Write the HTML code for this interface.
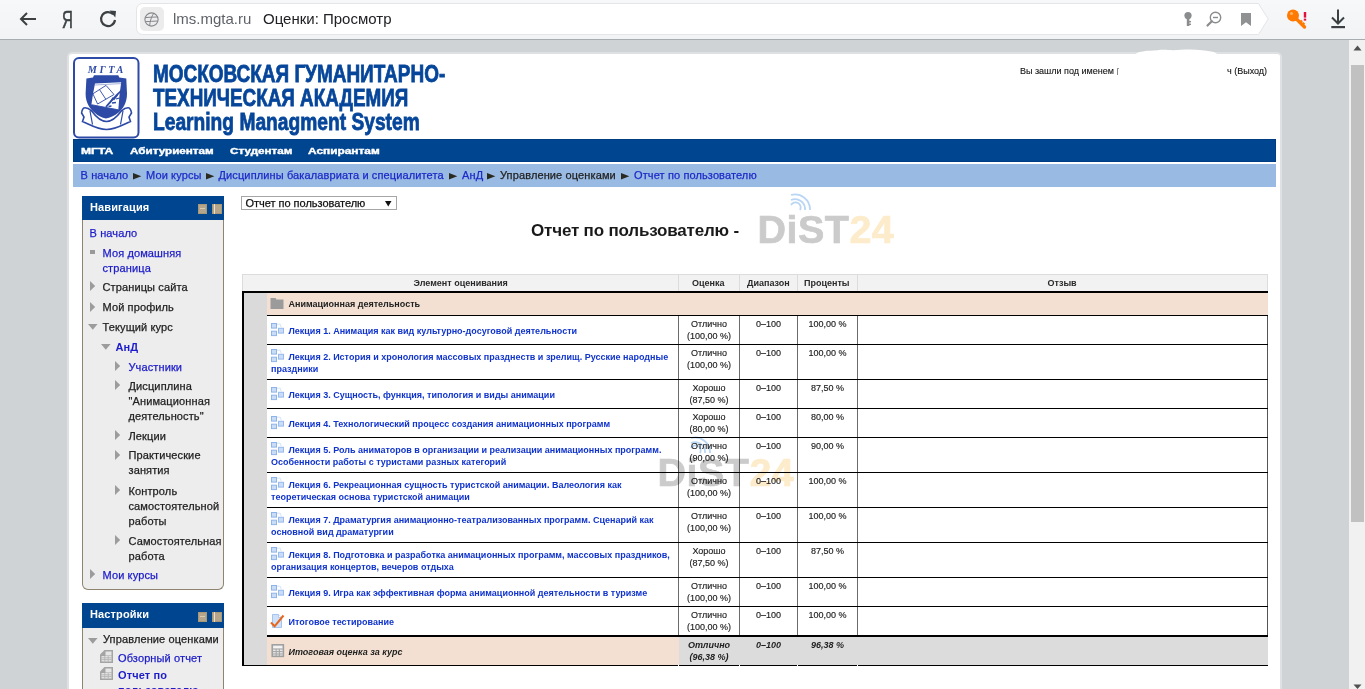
<!DOCTYPE html>
<html><head><meta charset="utf-8"><title>Оценки: Просмотр</title>
<style>html,body{margin:0;padding:0;width:1365px;height:689px;overflow:hidden;background:#d0d3d6;font-family:'Liberation Sans', sans-serif}
#root{position:relative;width:1365px;height:689px;overflow:hidden}</style></head>
<body><div id="root">
<div style="position:absolute;left:0px;top:0px;width:1365px;height:39px;background:linear-gradient(#f7f8f9,#f2f3f5);"></div>
<div style="position:absolute;left:0px;top:39px;width:1365px;height:1px;background:#a9acaf;"></div>
<svg style="position:absolute;left:18px;top:10px;" width="20" height="18" viewBox="0 0 20 18"><path d="M3 9 H18 M9 3 L3 9 L9 15" fill="none" stroke="#3c4043" stroke-width="2"/></svg>
<div style="position:absolute;left:62.3px;top:7.11px;font-size:23.5px;line-height:27.5px;color:#3c4043;font-weight:normal;font-style:normal;white-space:nowrap;font-family:'Liberation Sans', sans-serif;transform:scaleX(0.64);transform-origin:left;-webkit-text-stroke:0.6px #3c4043">Я</div>
<svg style="position:absolute;left:98px;top:8px;" width="22" height="22" viewBox="0 0 22 22"><path d="M15.2 6.3 A7 7 0 1 0 17 12" fill="none" stroke="#3c4043" stroke-width="2.2"/><path d="M11.5 2.5 L18 3 L17.3 9.5 Z" fill="#3c4043"/></svg>
<svg style="position:absolute;left:136px;top:3px;" width="1134" height="33" viewBox="0 0 1134 33"><path d="M6.5 0.5 H1122.5 L1132.2 16 L1122.5 31.5 H6.5 A6 6 0 0 1 0.5 25.5 V6.5 A6 6 0 0 1 6.5 0.5 Z" fill="#fff" stroke="#e4e5e7" stroke-width="1"/></svg>
<div style="position:absolute;left:140px;top:7px;width:24px;height:24px;background:#ececec;border-radius:5px"></div>
<svg style="position:absolute;left:144px;top:12px;" width="16" height="16" viewBox="0 0 16 16"><circle cx="7.5" cy="7.5" r="6.6" fill="none" stroke="#85878a" stroke-width="1.1"/><path d="M1.3 5.6 C5 5.2 10 5 13.7 5 M1.4 9.7 C5 9.5 10 9.2 13.6 9 M9.8 1.2 C7.5 4.5 6 9 5.6 13.9" fill="none" stroke="#85878a" stroke-width="1"/></svg>
<div style="position:absolute;left:173px;top:8.80px;font-size:15px;line-height:19px;color:#5f6368;font-weight:normal;font-style:normal;white-space:nowrap;font-family:'Liberation Sans', sans-serif;">lms.mgta.ru</div>
<div style="position:absolute;left:263px;top:8.80px;font-size:15px;line-height:19px;color:#202124;font-weight:normal;font-style:normal;white-space:nowrap;font-family:'Liberation Sans', sans-serif;">Оценки: Просмотр</div>
<svg style="position:absolute;left:1182px;top:11px;" width="12" height="16" viewBox="0 0 12 16"><circle cx="6" cy="4.6" r="3.6" fill="#8a8c8e"/><rect x="4.8" y="6" width="2.6" height="9" fill="#8a8c8e"/><rect x="7" y="10" width="2" height="1.4" fill="#8a8c8e"/><rect x="7" y="12.6" width="2" height="1.4" fill="#8a8c8e"/></svg>
<svg style="position:absolute;left:1205px;top:10px;" width="18" height="18" viewBox="0 0 18 18"><circle cx="10.5" cy="7.5" r="5.2" fill="none" stroke="#8a8c8e" stroke-width="1.4"/><path d="M8 7.5 H13" stroke="#8a8c8e" stroke-width="1.4"/><path d="M6.8 11.2 L2.5 15.5" stroke="#8a8c8e" stroke-width="2.2" stroke-linecap="round"/></svg>
<svg style="position:absolute;left:1240px;top:12px;" width="12" height="15" viewBox="0 0 12 15"><path d="M1 1 H11 V14 L6 10.3 L1 14 Z" fill="#8f9193"/></svg>
<svg style="position:absolute;left:1286px;top:8px;" width="24" height="22" viewBox="0 0 24 22"><circle cx="7" cy="7.5" r="6" fill="#ff7a00"/><path d="M9.5 10 L18.5 19" stroke="#ff7a00" stroke-width="3.4" stroke-linecap="round"/><path d="M14 14.5 L16 12.5 M16.3 16.8 L18.3 14.8" stroke="#ff7a00" stroke-width="2.4"/><circle cx="5.5" cy="5.5" r="1.6" fill="#ffd9a8" opacity="0.6"/><rect x="17.8" y="4" width="2.4" height="5.6" fill="#e0103a"/><rect x="17.8" y="10.6" width="2.4" height="2" fill="#e0103a"/></svg>
<svg style="position:absolute;left:1329px;top:8px;" width="18" height="22" viewBox="0 0 18 22"><path d="M9 1.5 V15.5 M3 9.5 L9 15.5 L15 9.5" fill="none" stroke="#3c4043" stroke-width="2"/><rect x="2.3" y="18" width="13.7" height="2.2" fill="#3c4043"/></svg>
<div style="position:absolute;left:0px;top:40px;width:1349px;height:649px;background:#d0d3d6;"></div>
<div style="position:absolute;left:1349px;top:40px;width:16px;height:649px;background:#f1f1f1;"></div>
<svg style="position:absolute;left:1353px;top:45px;" width="9" height="6" viewBox="0 0 9 6"><path d="M0.5 5.5 L4.5 0.5 L8.5 5.5 Z" fill="#505050"/></svg>
<div style="position:absolute;left:1351px;top:65px;width:13px;height:457px;background:#c1c1c1;"></div>
<svg style="position:absolute;left:1353px;top:684px;" width="9" height="6" viewBox="0 0 9 6"><path d="M0.5 0.5 L8.5 0.5 L4.5 5 Z" fill="#505050"/></svg>
<div style="position:absolute;left:67px;top:52px;width:1211px;height:700px;background:#fff;border:2px solid #dee0e2;border-radius:5px"></div>
<svg style="position:absolute;left:73px;top:57px;" width="67" height="82" viewBox="0 0 67 82"><rect x="1" y="1" width="64.5" height="79.5" rx="5" fill="#fff" stroke="#2d4aa6" stroke-width="2"/>
<text x="33.8" y="15.5" text-anchor="middle" font-family="Liberation Serif" font-style="italic" font-weight="bold" font-size="10.2" letter-spacing="2.6" fill="#2d4aa6">МГТА</text>
<path d="M13.4 21.5 L20 20.5 L21 18.3 L45.3 18.3 L46.3 20.5 L53.3 21.5 L54 36.8 C54 46 50 52 45.3 55.7 C41 59 37 60.5 33 61.5 C29 60.5 25 59 21.7 55.7 C17 52 12.6 46 12.6 36.8 Z" fill="#2d4aa6"/>
<path d="M22 26.6 L48.2 25.2 L46.5 38 L45.3 52.8 L18.4 47.7 L20 37 Z" fill="#fff"/>
<path d="M22 28 L48 26.6" stroke="#2d4aa6" stroke-width="0.7" opacity="0.6"/>
<path d="M19.9 36.8 L33 28.4 L41 37.5 L24.6 47 Z M26.5 32.6 L32.8 42.2" fill="none" stroke="#2d4aa6" stroke-width="0.9"/>
<path d="M18.4 47.7 L45.3 52.8" stroke="#2d4aa6" stroke-width="0.9"/>
<path d="M33 50 C37 45 43 39 48.2 33.5" fill="none" stroke="#2d4aa6" stroke-width="1.8"/>
<path d="M37 46 L40 40.5 M40.5 43 L44.5 38 M35.5 49.5 L38.5 49 M39 46 L43 45.5 M43 42 L46.5 41" stroke="#2d4aa6" stroke-width="1.3"/>
<path d="M8.6 56 C9 53 10 50.8 12 50.8 C14.5 50.8 16.5 52 18.5 53.8 C23 60 28 64.5 33.5 64.5 C39 64.5 44 60 48.5 53.8 C50.5 52 52.5 50.8 55 50.8 C57 50.8 58 53 58.5 56 L56 60 L57.5 64.5 C51 67 43 72.5 33.5 72.5 C24 72.5 16 67 9.5 64.5 L11 60 Z" fill="#fff" stroke="#2d4aa6" stroke-width="1.6"/>
<path d="M17 54 L19.5 67.5 M50 54 L47.5 67.5" fill="none" stroke="#2d4aa6" stroke-width="1.2"/></svg>
<div style="position:absolute;left:153px;top:60.18px;font-size:24px;line-height:28px;color:#06469a;font-weight:bold;font-style:normal;white-space:nowrap;font-family:'Liberation Sans', sans-serif;transform:scaleX(0.79);transform-origin:left;-webkit-text-stroke:0.8px #06469a">МОСКОВСКАЯ ГУМАНИТАРНО-</div>
<div style="position:absolute;left:153px;top:84.18px;font-size:24px;line-height:28px;color:#06469a;font-weight:bold;font-style:normal;white-space:nowrap;font-family:'Liberation Sans', sans-serif;transform:scaleX(0.785);transform-origin:left;-webkit-text-stroke:0.8px #06469a">ТЕХНИЧЕСКАЯ АКАДЕМИЯ</div>
<div style="position:absolute;left:153px;top:108.18px;font-size:24px;line-height:28px;color:#06469a;font-weight:bold;font-style:normal;white-space:nowrap;font-family:'Liberation Sans', sans-serif;transform:scaleX(0.8);transform-origin:left;-webkit-text-stroke:0.8px #06469a">Learning Managment System</div>
<div style="position:absolute;left:1020px;top:65.38px;font-size:9px;line-height:13px;color:#111;font-weight:normal;font-style:normal;white-space:nowrap;font-family:'Liberation Sans', sans-serif;-webkit-text-stroke:0.1px #111">Вы зашли под именем</div>
<div style="position:absolute;left:1117px;top:68px;width:1px;height:7px;background:#888;"></div>
<div style="position:absolute;left:1117px;top:68px;width:2px;height:1px;background:#999;"></div>
<div style="position:absolute;left:1227px;top:65.38px;font-size:9px;line-height:13px;color:#111;font-weight:normal;font-style:normal;white-space:nowrap;font-family:'Liberation Sans', sans-serif;-webkit-text-stroke:0.1px #111">ч (Выход)</div>
<svg style="position:absolute;left:1130px;top:47px;" width="95" height="9" viewBox="0 0 95 9"><path d="M4 8 C8 5 13 4 20 3.8 C27 3.6 31 2.5 38 3 C46 3.5 52 2.6 60 2.6 C68 2.6 76 3.5 84 5 L89 8 Z" fill="#fff"/></svg>
<div style="position:absolute;left:73px;top:139px;width:1203px;height:23px;background:#004590;box-shadow:inset 0 0 0 1px #003c80"></div>
<div style="position:absolute;left:80.5px;top:144.04px;font-size:9.4px;line-height:13.4px;color:#fff;font-weight:bold;font-style:normal;white-space:nowrap;font-family:'Liberation Sans', sans-serif;transform:scaleX(1.287);transform-origin:left;-webkit-text-stroke:0.4px #fff">МГТА</div>
<div style="position:absolute;left:129.5px;top:144.04px;font-size:9.4px;line-height:13.4px;color:#fff;font-weight:bold;font-style:normal;white-space:nowrap;font-family:'Liberation Sans', sans-serif;transform:scaleX(1.245);transform-origin:left;-webkit-text-stroke:0.4px #fff">Абитуриентам</div>
<div style="position:absolute;left:229.5px;top:144.04px;font-size:9.4px;line-height:13.4px;color:#fff;font-weight:bold;font-style:normal;white-space:nowrap;font-family:'Liberation Sans', sans-serif;transform:scaleX(1.245);transform-origin:left;-webkit-text-stroke:0.4px #fff">Студентам</div>
<div style="position:absolute;left:307.5px;top:144.04px;font-size:9.4px;line-height:13.4px;color:#fff;font-weight:bold;font-style:normal;white-space:nowrap;font-family:'Liberation Sans', sans-serif;transform:scaleX(1.266);transform-origin:left;-webkit-text-stroke:0.4px #fff">Аспирантам</div>
<div style="position:absolute;left:73px;top:164px;width:1203px;height:23px;background:#99bbe3;"></div>
<div style="position:absolute;left:80.5px;top:167.89px;font-size:11px;line-height:15px;color:#1c2ac8;font-weight:normal;font-style:normal;white-space:nowrap;font-family:'Liberation Sans', sans-serif;;letter-spacing:0.12px;-webkit-text-stroke:0.25px #1c2ac8">В начало</div>
<svg style="position:absolute;left:133px;top:172.5px;" width="9" height="7" viewBox="0 0 9 7"><path d="M0 0 L8.3 3.25 L0 6.5 Z" fill="#2b2a20"/></svg>
<div style="position:absolute;left:146px;top:167.89px;font-size:11px;line-height:15px;color:#1c2ac8;font-weight:normal;font-style:normal;white-space:nowrap;font-family:'Liberation Sans', sans-serif;;letter-spacing:0.12px;-webkit-text-stroke:0.25px #1c2ac8">Мои курсы</div>
<svg style="position:absolute;left:206px;top:172.5px;" width="9" height="7" viewBox="0 0 9 7"><path d="M0 0 L8.3 3.25 L0 6.5 Z" fill="#2b2a20"/></svg>
<div style="position:absolute;left:218.5px;top:167.89px;font-size:11px;line-height:15px;color:#1c2ac8;font-weight:normal;font-style:normal;white-space:nowrap;font-family:'Liberation Sans', sans-serif;;letter-spacing:0.12px;-webkit-text-stroke:0.25px #1c2ac8">Дисциплины бакалавриата и специалитета</div>
<svg style="position:absolute;left:449px;top:172.5px;" width="9" height="7" viewBox="0 0 9 7"><path d="M0 0 L8.3 3.25 L0 6.5 Z" fill="#2b2a20"/></svg>
<div style="position:absolute;left:462px;top:167.89px;font-size:11px;line-height:15px;color:#1c2ac8;font-weight:normal;font-style:normal;white-space:nowrap;font-family:'Liberation Sans', sans-serif;;letter-spacing:0.12px;-webkit-text-stroke:0.25px #1c2ac8">АнД</div>
<svg style="position:absolute;left:487px;top:172.5px;" width="9" height="7" viewBox="0 0 9 7"><path d="M0 0 L8.3 3.25 L0 6.5 Z" fill="#2b2a20"/></svg>
<div style="position:absolute;left:500px;top:167.89px;font-size:11px;line-height:15px;color:#222;font-weight:normal;font-style:normal;white-space:nowrap;font-family:'Liberation Sans', sans-serif;;letter-spacing:0.12px;-webkit-text-stroke:0.25px #222">Управление оценками</div>
<svg style="position:absolute;left:621px;top:172.5px;" width="9" height="7" viewBox="0 0 9 7"><path d="M0 0 L8.3 3.25 L0 6.5 Z" fill="#2b2a20"/></svg>
<div style="position:absolute;left:634px;top:167.89px;font-size:11px;line-height:15px;color:#1c2ac8;font-weight:normal;font-style:normal;white-space:nowrap;font-family:'Liberation Sans', sans-serif;;letter-spacing:0.12px;-webkit-text-stroke:0.25px #1c2ac8">Отчет по пользователю</div>
<div style="position:absolute;left:82px;top:219px;width:140px;height:370px;background:#ededed;border:1px solid #8e846f;border-top:none;border-radius:0 0 6px 6px"></div>
<div style="position:absolute;left:82px;top:196px;width:142px;height:24px;background:#004590;"></div>
<div style="position:absolute;left:90px;top:200.19px;font-size:11px;line-height:15px;color:#fff;font-weight:bold;font-style:normal;white-space:nowrap;font-family:'Liberation Sans', sans-serif;;letter-spacing:0.12px">Навигация</div>
<div style="position:absolute;left:198px;top:204px;width:9px;height:10px;background:#b5a58a;box-shadow:inset 0 0 0 1px #a89878"></div>
<div style="position:absolute;left:200px;top:208px;width:5px;height:1px;background:#d8ccb6;"></div>
<div style="position:absolute;left:212px;top:204px;width:10px;height:10px;background:#b5a58a;box-shadow:inset 0 0 0 1px #a89878"></div>
<div style="position:absolute;left:214px;top:204px;width:1px;height:10px;background:#e8dfcf;"></div>
<div style="position:absolute;left:89.5px;top:225.69px;font-size:11px;line-height:15px;color:#1c1cca;font-weight:normal;font-style:normal;white-space:nowrap;font-family:'Liberation Sans', sans-serif;;letter-spacing:0.12px;-webkit-text-stroke:0.25px #1c1cca">В начало</div>
<div style="position:absolute;left:90px;top:250px;width:5px;height:4px;background:#999;"></div>
<div style="position:absolute;left:102.5px;top:245.69px;font-size:11px;line-height:15px;color:#1c1cca;font-weight:normal;font-style:normal;white-space:nowrap;font-family:'Liberation Sans', sans-serif;;letter-spacing:0.12px;-webkit-text-stroke:0.25px #1c1cca">Моя домашняя</div>
<div style="position:absolute;left:102.5px;top:260.69px;font-size:11px;line-height:15px;color:#1c1cca;font-weight:normal;font-style:normal;white-space:nowrap;font-family:'Liberation Sans', sans-serif;;letter-spacing:0.12px;-webkit-text-stroke:0.25px #1c1cca">страница</div>
<svg style="position:absolute;left:90px;top:281.4px;" width="6" height="10" viewBox="0 0 6 10"><path d="M0 0 L5.2 5 L0 10 Z" fill="#9c9c9c"/></svg>
<div style="position:absolute;left:102.5px;top:279.69px;font-size:11px;line-height:15px;color:#222;font-weight:normal;font-style:normal;white-space:nowrap;font-family:'Liberation Sans', sans-serif;;letter-spacing:0.12px;-webkit-text-stroke:0.25px #222">Страницы сайта</div>
<svg style="position:absolute;left:90px;top:301.59999999999997px;" width="6" height="10" viewBox="0 0 6 10"><path d="M0 0 L5.2 5 L0 10 Z" fill="#9c9c9c"/></svg>
<div style="position:absolute;left:102.5px;top:299.89px;font-size:11px;line-height:15px;color:#222;font-weight:normal;font-style:normal;white-space:nowrap;font-family:'Liberation Sans', sans-serif;;letter-spacing:0.12px;-webkit-text-stroke:0.25px #222">Мой профиль</div>
<svg style="position:absolute;left:88px;top:324px;" width="10" height="6" viewBox="0 0 10 6"><path d="M0 0 L9.6 0 L4.8 5.7 Z" fill="#9c9c9c"/></svg>
<div style="position:absolute;left:102.5px;top:319.89px;font-size:11px;line-height:15px;color:#222;font-weight:normal;font-style:normal;white-space:nowrap;font-family:'Liberation Sans', sans-serif;;letter-spacing:0.12px;-webkit-text-stroke:0.25px #222">Текущий курс</div>
<svg style="position:absolute;left:101px;top:344px;" width="10" height="6" viewBox="0 0 10 6"><path d="M0 0 L9.6 0 L4.8 5.7 Z" fill="#9c9c9c"/></svg>
<div style="position:absolute;left:115.5px;top:339.69px;font-size:11px;line-height:15px;color:#1c1cca;font-weight:bold;font-style:normal;white-space:nowrap;font-family:'Liberation Sans', sans-serif;;letter-spacing:0.12px">АнД</div>
<svg style="position:absolute;left:115px;top:361.4px;" width="6" height="10" viewBox="0 0 6 10"><path d="M0 0 L5.2 5 L0 10 Z" fill="#9c9c9c"/></svg>
<div style="position:absolute;left:128.5px;top:359.69px;font-size:11px;line-height:15px;color:#1c1cca;font-weight:normal;font-style:normal;white-space:nowrap;font-family:'Liberation Sans', sans-serif;;letter-spacing:0.12px;-webkit-text-stroke:0.25px #1c1cca">Участники</div>
<svg style="position:absolute;left:115px;top:380.4px;" width="6" height="10" viewBox="0 0 6 10"><path d="M0 0 L5.2 5 L0 10 Z" fill="#9c9c9c"/></svg>
<div style="position:absolute;left:128.5px;top:378.69px;font-size:11px;line-height:15px;color:#222;font-weight:normal;font-style:normal;white-space:nowrap;font-family:'Liberation Sans', sans-serif;;letter-spacing:0.12px;-webkit-text-stroke:0.25px #222">Дисциплина</div>
<div style="position:absolute;left:128.5px;top:393.69px;font-size:11px;line-height:15px;color:#222;font-weight:normal;font-style:normal;white-space:nowrap;font-family:'Liberation Sans', sans-serif;;letter-spacing:0.12px;-webkit-text-stroke:0.25px #222">"Анимационная</div>
<div style="position:absolute;left:128.5px;top:408.69px;font-size:11px;line-height:15px;color:#222;font-weight:normal;font-style:normal;white-space:nowrap;font-family:'Liberation Sans', sans-serif;;letter-spacing:0.12px;-webkit-text-stroke:0.25px #222">деятельность"</div>
<svg style="position:absolute;left:115px;top:430.4px;" width="6" height="10" viewBox="0 0 6 10"><path d="M0 0 L5.2 5 L0 10 Z" fill="#9c9c9c"/></svg>
<div style="position:absolute;left:128.5px;top:428.69px;font-size:11px;line-height:15px;color:#222;font-weight:normal;font-style:normal;white-space:nowrap;font-family:'Liberation Sans', sans-serif;;letter-spacing:0.12px;-webkit-text-stroke:0.25px #222">Лекции</div>
<svg style="position:absolute;left:115px;top:449.9px;" width="6" height="10" viewBox="0 0 6 10"><path d="M0 0 L5.2 5 L0 10 Z" fill="#9c9c9c"/></svg>
<div style="position:absolute;left:128.5px;top:448.19px;font-size:11px;line-height:15px;color:#222;font-weight:normal;font-style:normal;white-space:nowrap;font-family:'Liberation Sans', sans-serif;;letter-spacing:0.12px;-webkit-text-stroke:0.25px #222">Практические</div>
<div style="position:absolute;left:128.5px;top:463.19px;font-size:11px;line-height:15px;color:#222;font-weight:normal;font-style:normal;white-space:nowrap;font-family:'Liberation Sans', sans-serif;;letter-spacing:0.12px;-webkit-text-stroke:0.25px #222">занятия</div>
<svg style="position:absolute;left:115px;top:485.4px;" width="6" height="10" viewBox="0 0 6 10"><path d="M0 0 L5.2 5 L0 10 Z" fill="#9c9c9c"/></svg>
<div style="position:absolute;left:128.5px;top:483.69px;font-size:11px;line-height:15px;color:#222;font-weight:normal;font-style:normal;white-space:nowrap;font-family:'Liberation Sans', sans-serif;;letter-spacing:0.12px;-webkit-text-stroke:0.25px #222">Контроль</div>
<div style="position:absolute;left:128.5px;top:498.69px;font-size:11px;line-height:15px;color:#222;font-weight:normal;font-style:normal;white-space:nowrap;font-family:'Liberation Sans', sans-serif;;letter-spacing:0.12px;-webkit-text-stroke:0.25px #222">самостоятельной</div>
<div style="position:absolute;left:128.5px;top:513.69px;font-size:11px;line-height:15px;color:#222;font-weight:normal;font-style:normal;white-space:nowrap;font-family:'Liberation Sans', sans-serif;;letter-spacing:0.12px;-webkit-text-stroke:0.25px #222">работы</div>
<svg style="position:absolute;left:115px;top:535.4px;" width="6" height="10" viewBox="0 0 6 10"><path d="M0 0 L5.2 5 L0 10 Z" fill="#9c9c9c"/></svg>
<div style="position:absolute;left:128.5px;top:533.69px;font-size:11px;line-height:15px;color:#222;font-weight:normal;font-style:normal;white-space:nowrap;font-family:'Liberation Sans', sans-serif;;letter-spacing:0.12px;-webkit-text-stroke:0.25px #222">Самостоятельная</div>
<div style="position:absolute;left:128.5px;top:548.69px;font-size:11px;line-height:15px;color:#222;font-weight:normal;font-style:normal;white-space:nowrap;font-family:'Liberation Sans', sans-serif;;letter-spacing:0.12px;-webkit-text-stroke:0.25px #222">работа</div>
<svg style="position:absolute;left:90px;top:569.4px;" width="6" height="10" viewBox="0 0 6 10"><path d="M0 0 L5.2 5 L0 10 Z" fill="#9c9c9c"/></svg>
<div style="position:absolute;left:102.5px;top:567.69px;font-size:11px;line-height:15px;color:#1c1cca;font-weight:normal;font-style:normal;white-space:nowrap;font-family:'Liberation Sans', sans-serif;;letter-spacing:0.12px;-webkit-text-stroke:0.25px #1c1cca">Мои курсы</div>
<div style="position:absolute;left:82px;top:627px;width:140px;height:80px;background:#ededed;border:1px solid #8e846f;border-top:none"></div>
<div style="position:absolute;left:82px;top:603px;width:142px;height:25px;background:#004590;"></div>
<div style="position:absolute;left:90px;top:606.89px;font-size:11px;line-height:15px;color:#fff;font-weight:bold;font-style:normal;white-space:nowrap;font-family:'Liberation Sans', sans-serif;;letter-spacing:0.12px">Настройки</div>
<div style="position:absolute;left:198px;top:612px;width:9px;height:10px;background:#b5a58a;box-shadow:inset 0 0 0 1px #a89878"></div>
<div style="position:absolute;left:200px;top:616px;width:5px;height:1px;background:#d8ccb6;"></div>
<div style="position:absolute;left:212px;top:612px;width:10px;height:10px;background:#b5a58a;box-shadow:inset 0 0 0 1px #a89878"></div>
<div style="position:absolute;left:214px;top:612px;width:1px;height:10px;background:#e8dfcf;"></div>
<svg style="position:absolute;left:88px;top:637.5px;" width="10" height="6" viewBox="0 0 10 6"><path d="M0 0 L9.6 0 L4.8 5.7 Z" fill="#9c9c9c"/></svg>
<div style="position:absolute;left:103px;top:632.19px;font-size:11px;line-height:15px;color:#222;font-weight:normal;font-style:normal;white-space:nowrap;font-family:'Liberation Sans', sans-serif;;letter-spacing:0.12px;-webkit-text-stroke:0.25px #222">Управление оценками</div>
<svg style="position:absolute;left:100px;top:650px;" width="14" height="14" viewBox="0 0 14 14"><path d="M0 4.5 L4.5 0 H13 V13 H0 Z" fill="#a4a4a4"/><rect x="5.5" y="1.5" width="6" height="4" fill="#e6e6e6"/><rect x="1.5" y="6" width="10" height="5.5" fill="#e2e2e2"/><path d="M1.5 7.8 H11.5 M1.5 9.6 H11.5 M4.8 6 V11.5 M8.2 6 V11.5" stroke="#b0b0b0" stroke-width="0.8"/></svg>
<div style="position:absolute;left:118px;top:650.69px;font-size:11px;line-height:15px;color:#1c1cca;font-weight:normal;font-style:normal;white-space:nowrap;font-family:'Liberation Sans', sans-serif;;letter-spacing:0.12px;-webkit-text-stroke:0.25px #1c1cca">Обзорный отчет</div>
<svg style="position:absolute;left:100px;top:667px;" width="14" height="14" viewBox="0 0 14 14"><path d="M0 4.5 L4.5 0 H13 V13 H0 Z" fill="#a4a4a4"/><rect x="5.5" y="1.5" width="6" height="4" fill="#e6e6e6"/><rect x="1.5" y="6" width="10" height="5.5" fill="#e2e2e2"/><path d="M1.5 7.8 H11.5 M1.5 9.6 H11.5 M4.8 6 V11.5 M8.2 6 V11.5" stroke="#b0b0b0" stroke-width="0.8"/></svg>
<div style="position:absolute;left:118px;top:667.99px;font-size:11px;line-height:15px;color:#1c1cca;font-weight:bold;font-style:normal;white-space:nowrap;font-family:'Liberation Sans', sans-serif;;letter-spacing:0.12px">Отчет по</div>
<div style="position:absolute;left:118px;top:682.99px;font-size:11px;line-height:15px;color:#1c1cca;font-weight:bold;font-style:normal;white-space:nowrap;font-family:'Liberation Sans', sans-serif;;letter-spacing:0.12px">пользователю</div>
<div style="position:absolute;left:241px;top:196px;width:154px;height:12px;background:#fff;border:1px solid #a6a6a6"></div>
<div style="position:absolute;left:245.5px;top:195.69px;font-size:11px;line-height:15px;color:#111;font-weight:normal;font-style:normal;white-space:nowrap;font-family:'Liberation Sans', sans-serif;letter-spacing:-0.02px;-webkit-text-stroke:0.25px #111">Отчет по пользователю</div>
<svg style="position:absolute;left:385px;top:201px;" width="7" height="6" viewBox="0 0 7 6"><path d="M0 0 H6.5 L3.25 5.5 Z" fill="#111"/></svg>
<div style="position:absolute;left:531px;top:219.61px;font-size:17px;line-height:21px;color:#1a1a1a;font-weight:bold;font-style:normal;white-space:nowrap;font-family:'Liberation Sans', sans-serif;letter-spacing:-0.18px">Отчет по пользователю -</div>
<div style="position:absolute;left:242px;top:274px;width:1026px;height:17px;background:#f2f2f2;box-shadow:inset 1px 1px 0 #dcdcdc, inset -1px 0 0 #dcdcdc"></div>
<div style="position:absolute;left:678px;top:274px;width:1px;height:17px;background:#dcdcdc;"></div>
<div style="position:absolute;left:739px;top:274px;width:1px;height:17px;background:#dcdcdc;"></div>
<div style="position:absolute;left:797px;top:274px;width:1px;height:17px;background:#dcdcdc;"></div>
<div style="position:absolute;left:857px;top:274px;width:1px;height:17px;background:#dcdcdc;"></div>
<div style="position:absolute;left:413.5px;top:276.88px;font-size:9px;line-height:13px;color:#2a2a2a;font-weight:bold;font-style:normal;white-space:nowrap;font-family:'Liberation Sans', sans-serif;">Элемент оценивания</div>
<div style="position:absolute;left:692px;top:276.88px;font-size:9px;line-height:13px;color:#2a2a2a;font-weight:bold;font-style:normal;white-space:nowrap;font-family:'Liberation Sans', sans-serif;">Оценка</div>
<div style="position:absolute;left:747px;top:276.88px;font-size:9px;line-height:13px;color:#2a2a2a;font-weight:bold;font-style:normal;white-space:nowrap;font-family:'Liberation Sans', sans-serif;">Диапазон</div>
<div style="position:absolute;left:804px;top:276.88px;font-size:9px;line-height:13px;color:#2a2a2a;font-weight:bold;font-style:normal;white-space:nowrap;font-family:'Liberation Sans', sans-serif;">Проценты</div>
<div style="position:absolute;left:1047.5px;top:276.88px;font-size:9px;line-height:13px;color:#2a2a2a;font-weight:bold;font-style:normal;white-space:nowrap;font-family:'Liberation Sans', sans-serif;">Отзыв</div>
<div style="position:absolute;left:242px;top:291px;width:1026px;height:2px;background:#000;"></div>
<div style="position:absolute;left:242px;top:293px;width:2px;height:373px;background:#000;"></div>
<div style="position:absolute;left:244px;top:293px;width:23px;height:372px;background:#dadada;"></div>
<div style="position:absolute;left:267px;top:293px;width:1001px;height:22px;background:#f3e0d2;"></div>
<svg style="position:absolute;left:270px;top:297px;" width="15" height="13" viewBox="0 0 15 13"><path d="M0.5 1 H5.5 L6.5 2.5 H13.5 V12 H0.5 Z" fill="#9b9b9b"/></svg>
<div style="position:absolute;left:288.5px;top:298.38px;font-size:9px;line-height:13px;color:#222;font-weight:bold;font-style:normal;white-space:nowrap;font-family:'Liberation Sans', sans-serif;">Анимационная деятельность</div>
<div style="position:absolute;left:267px;top:315px;width:1001px;height:1px;background:#000;"></div>
<div style="position:absolute;left:267px;top:316px;width:1001px;height:28px;background:#fff;"></div>
<svg style="position:absolute;left:270px;top:323px;" width="15" height="14" viewBox="0 0 15 14"><rect x="1.5" y="0.5" width="5" height="4.6" fill="#c9ddf6" stroke="#8fb4ea" stroke-width="1"/><rect x="1.5" y="8.2" width="5" height="4.4" fill="#c9ddf6" stroke="#8fb4ea" stroke-width="1"/><rect x="8.5" y="5.3" width="5" height="4.8" fill="#c9ddf6" stroke="#98baec" stroke-width="1"/><path d="M7 1.2 H10.3 L11.3 4.5" fill="none" stroke="#d5e4f8" stroke-width="1"/></svg>
<div style="position:absolute;left:288.5px;top:324.88px;font-size:9px;line-height:12px;color:#1034cc;font-weight:bold;font-style:normal;white-space:nowrap;font-family:'Liberation Sans', sans-serif;">Лекция 1. Анимация как вид культурно-досуговой деятельности</div>
<div style="position:absolute;left:679px;width:60px;top:317.88px;text-align:center;font-size:9px;line-height:12px;color:#222;font-weight:normal;font-style:normal;white-space:nowrap;font-family:'Liberation Sans', sans-serif;-webkit-text-stroke:0.15px #222;">Отлично</div>
<div style="position:absolute;left:679px;width:60px;top:329.88px;text-align:center;font-size:9px;line-height:12px;color:#222;font-weight:normal;font-style:normal;white-space:nowrap;font-family:'Liberation Sans', sans-serif;-webkit-text-stroke:0.15px #222;">(100,00 %)</div>
<div style="position:absolute;left:740px;width:57px;top:317.88px;text-align:center;font-size:9px;line-height:12px;color:#222;font-weight:normal;font-style:normal;white-space:nowrap;font-family:'Liberation Sans', sans-serif;-webkit-text-stroke:0.15px #222;">0–100</div>
<div style="position:absolute;left:798px;width:59px;top:317.88px;text-align:center;font-size:9px;line-height:12px;color:#222;font-weight:normal;font-style:normal;white-space:nowrap;font-family:'Liberation Sans', sans-serif;-webkit-text-stroke:0.15px #222;">100,00 %</div>
<div style="position:absolute;left:678px;top:316px;width:1px;height:28px;background:#6b6b6b;"></div>
<div style="position:absolute;left:739px;top:316px;width:1px;height:28px;background:#6b6b6b;"></div>
<div style="position:absolute;left:797px;top:316px;width:1px;height:28px;background:#6b6b6b;"></div>
<div style="position:absolute;left:857px;top:316px;width:1px;height:28px;background:#6b6b6b;"></div>
<div style="position:absolute;left:1267px;top:316px;width:1px;height:28px;background:#555;"></div>
<div style="position:absolute;left:267px;top:344px;width:1001px;height:1px;background:#000;"></div>
<div style="position:absolute;left:267px;top:345px;width:1001px;height:34px;background:#fff;"></div>
<svg style="position:absolute;left:270px;top:349px;" width="15" height="14" viewBox="0 0 15 14"><rect x="1.5" y="0.5" width="5" height="4.6" fill="#c9ddf6" stroke="#8fb4ea" stroke-width="1"/><rect x="1.5" y="8.2" width="5" height="4.4" fill="#c9ddf6" stroke="#8fb4ea" stroke-width="1"/><rect x="8.5" y="5.3" width="5" height="4.8" fill="#c9ddf6" stroke="#98baec" stroke-width="1"/><path d="M7 1.2 H10.3 L11.3 4.5" fill="none" stroke="#d5e4f8" stroke-width="1"/></svg>
<div style="position:absolute;left:288.5px;top:350.88px;font-size:9px;line-height:12px;color:#1034cc;font-weight:bold;font-style:normal;white-space:nowrap;font-family:'Liberation Sans', sans-serif;">Лекция 2. История и хронология массовых празднеств и зрелищ. Русские народные</div>
<div style="position:absolute;left:271px;top:362.88px;font-size:9px;line-height:12px;color:#1034cc;font-weight:bold;font-style:normal;white-space:nowrap;font-family:'Liberation Sans', sans-serif;">праздники</div>
<div style="position:absolute;left:679px;width:60px;top:346.88px;text-align:center;font-size:9px;line-height:12px;color:#222;font-weight:normal;font-style:normal;white-space:nowrap;font-family:'Liberation Sans', sans-serif;-webkit-text-stroke:0.15px #222;">Отлично</div>
<div style="position:absolute;left:679px;width:60px;top:358.88px;text-align:center;font-size:9px;line-height:12px;color:#222;font-weight:normal;font-style:normal;white-space:nowrap;font-family:'Liberation Sans', sans-serif;-webkit-text-stroke:0.15px #222;">(100,00 %)</div>
<div style="position:absolute;left:740px;width:57px;top:346.88px;text-align:center;font-size:9px;line-height:12px;color:#222;font-weight:normal;font-style:normal;white-space:nowrap;font-family:'Liberation Sans', sans-serif;-webkit-text-stroke:0.15px #222;">0–100</div>
<div style="position:absolute;left:798px;width:59px;top:346.88px;text-align:center;font-size:9px;line-height:12px;color:#222;font-weight:normal;font-style:normal;white-space:nowrap;font-family:'Liberation Sans', sans-serif;-webkit-text-stroke:0.15px #222;">100,00 %</div>
<div style="position:absolute;left:678px;top:345px;width:1px;height:34px;background:#6b6b6b;"></div>
<div style="position:absolute;left:739px;top:345px;width:1px;height:34px;background:#6b6b6b;"></div>
<div style="position:absolute;left:797px;top:345px;width:1px;height:34px;background:#6b6b6b;"></div>
<div style="position:absolute;left:857px;top:345px;width:1px;height:34px;background:#6b6b6b;"></div>
<div style="position:absolute;left:1267px;top:345px;width:1px;height:34px;background:#555;"></div>
<div style="position:absolute;left:267px;top:379px;width:1001px;height:1px;background:#000;"></div>
<div style="position:absolute;left:267px;top:380px;width:1001px;height:28px;background:#fff;"></div>
<svg style="position:absolute;left:270px;top:387px;" width="15" height="14" viewBox="0 0 15 14"><rect x="1.5" y="0.5" width="5" height="4.6" fill="#c9ddf6" stroke="#8fb4ea" stroke-width="1"/><rect x="1.5" y="8.2" width="5" height="4.4" fill="#c9ddf6" stroke="#8fb4ea" stroke-width="1"/><rect x="8.5" y="5.3" width="5" height="4.8" fill="#c9ddf6" stroke="#98baec" stroke-width="1"/><path d="M7 1.2 H10.3 L11.3 4.5" fill="none" stroke="#d5e4f8" stroke-width="1"/></svg>
<div style="position:absolute;left:288.5px;top:388.88px;font-size:9px;line-height:12px;color:#1034cc;font-weight:bold;font-style:normal;white-space:nowrap;font-family:'Liberation Sans', sans-serif;">Лекция 3. Сущность, функция, типология и виды анимации</div>
<div style="position:absolute;left:679px;width:60px;top:381.88px;text-align:center;font-size:9px;line-height:12px;color:#222;font-weight:normal;font-style:normal;white-space:nowrap;font-family:'Liberation Sans', sans-serif;-webkit-text-stroke:0.15px #222;">Хорошо</div>
<div style="position:absolute;left:679px;width:60px;top:393.88px;text-align:center;font-size:9px;line-height:12px;color:#222;font-weight:normal;font-style:normal;white-space:nowrap;font-family:'Liberation Sans', sans-serif;-webkit-text-stroke:0.15px #222;">(87,50 %)</div>
<div style="position:absolute;left:740px;width:57px;top:381.88px;text-align:center;font-size:9px;line-height:12px;color:#222;font-weight:normal;font-style:normal;white-space:nowrap;font-family:'Liberation Sans', sans-serif;-webkit-text-stroke:0.15px #222;">0–100</div>
<div style="position:absolute;left:798px;width:59px;top:381.88px;text-align:center;font-size:9px;line-height:12px;color:#222;font-weight:normal;font-style:normal;white-space:nowrap;font-family:'Liberation Sans', sans-serif;-webkit-text-stroke:0.15px #222;">87,50 %</div>
<div style="position:absolute;left:678px;top:380px;width:1px;height:28px;background:#6b6b6b;"></div>
<div style="position:absolute;left:739px;top:380px;width:1px;height:28px;background:#6b6b6b;"></div>
<div style="position:absolute;left:797px;top:380px;width:1px;height:28px;background:#6b6b6b;"></div>
<div style="position:absolute;left:857px;top:380px;width:1px;height:28px;background:#6b6b6b;"></div>
<div style="position:absolute;left:1267px;top:380px;width:1px;height:28px;background:#555;"></div>
<div style="position:absolute;left:267px;top:408px;width:1001px;height:1px;background:#000;"></div>
<div style="position:absolute;left:267px;top:409px;width:1001px;height:28px;background:#fff;"></div>
<svg style="position:absolute;left:270px;top:416px;" width="15" height="14" viewBox="0 0 15 14"><rect x="1.5" y="0.5" width="5" height="4.6" fill="#c9ddf6" stroke="#8fb4ea" stroke-width="1"/><rect x="1.5" y="8.2" width="5" height="4.4" fill="#c9ddf6" stroke="#8fb4ea" stroke-width="1"/><rect x="8.5" y="5.3" width="5" height="4.8" fill="#c9ddf6" stroke="#98baec" stroke-width="1"/><path d="M7 1.2 H10.3 L11.3 4.5" fill="none" stroke="#d5e4f8" stroke-width="1"/></svg>
<div style="position:absolute;left:288.5px;top:417.88px;font-size:9px;line-height:12px;color:#1034cc;font-weight:bold;font-style:normal;white-space:nowrap;font-family:'Liberation Sans', sans-serif;">Лекция 4. Технологический процесс создания анимационных программ</div>
<div style="position:absolute;left:679px;width:60px;top:410.88px;text-align:center;font-size:9px;line-height:12px;color:#222;font-weight:normal;font-style:normal;white-space:nowrap;font-family:'Liberation Sans', sans-serif;-webkit-text-stroke:0.15px #222;">Хорошо</div>
<div style="position:absolute;left:679px;width:60px;top:422.88px;text-align:center;font-size:9px;line-height:12px;color:#222;font-weight:normal;font-style:normal;white-space:nowrap;font-family:'Liberation Sans', sans-serif;-webkit-text-stroke:0.15px #222;">(80,00 %)</div>
<div style="position:absolute;left:740px;width:57px;top:410.88px;text-align:center;font-size:9px;line-height:12px;color:#222;font-weight:normal;font-style:normal;white-space:nowrap;font-family:'Liberation Sans', sans-serif;-webkit-text-stroke:0.15px #222;">0–100</div>
<div style="position:absolute;left:798px;width:59px;top:410.88px;text-align:center;font-size:9px;line-height:12px;color:#222;font-weight:normal;font-style:normal;white-space:nowrap;font-family:'Liberation Sans', sans-serif;-webkit-text-stroke:0.15px #222;">80,00 %</div>
<div style="position:absolute;left:678px;top:409px;width:1px;height:28px;background:#6b6b6b;"></div>
<div style="position:absolute;left:739px;top:409px;width:1px;height:28px;background:#6b6b6b;"></div>
<div style="position:absolute;left:797px;top:409px;width:1px;height:28px;background:#6b6b6b;"></div>
<div style="position:absolute;left:857px;top:409px;width:1px;height:28px;background:#6b6b6b;"></div>
<div style="position:absolute;left:1267px;top:409px;width:1px;height:28px;background:#555;"></div>
<div style="position:absolute;left:267px;top:437px;width:1001px;height:1px;background:#000;"></div>
<div style="position:absolute;left:267px;top:438px;width:1001px;height:34px;background:#fff;"></div>
<svg style="position:absolute;left:270px;top:442px;" width="15" height="14" viewBox="0 0 15 14"><rect x="1.5" y="0.5" width="5" height="4.6" fill="#c9ddf6" stroke="#8fb4ea" stroke-width="1"/><rect x="1.5" y="8.2" width="5" height="4.4" fill="#c9ddf6" stroke="#8fb4ea" stroke-width="1"/><rect x="8.5" y="5.3" width="5" height="4.8" fill="#c9ddf6" stroke="#98baec" stroke-width="1"/><path d="M7 1.2 H10.3 L11.3 4.5" fill="none" stroke="#d5e4f8" stroke-width="1"/></svg>
<div style="position:absolute;left:288.5px;top:443.88px;font-size:9px;line-height:12px;color:#1034cc;font-weight:bold;font-style:normal;white-space:nowrap;font-family:'Liberation Sans', sans-serif;">Лекция 5. Роль аниматоров в организации и реализации анимационных программ.</div>
<div style="position:absolute;left:271px;top:455.88px;font-size:9px;line-height:12px;color:#1034cc;font-weight:bold;font-style:normal;white-space:nowrap;font-family:'Liberation Sans', sans-serif;">Особенности работы с туристами разных категорий</div>
<div style="position:absolute;left:679px;width:60px;top:439.88px;text-align:center;font-size:9px;line-height:12px;color:#222;font-weight:normal;font-style:normal;white-space:nowrap;font-family:'Liberation Sans', sans-serif;-webkit-text-stroke:0.15px #222;">Отлично</div>
<div style="position:absolute;left:679px;width:60px;top:451.88px;text-align:center;font-size:9px;line-height:12px;color:#222;font-weight:normal;font-style:normal;white-space:nowrap;font-family:'Liberation Sans', sans-serif;-webkit-text-stroke:0.15px #222;">(90,00 %)</div>
<div style="position:absolute;left:740px;width:57px;top:439.88px;text-align:center;font-size:9px;line-height:12px;color:#222;font-weight:normal;font-style:normal;white-space:nowrap;font-family:'Liberation Sans', sans-serif;-webkit-text-stroke:0.15px #222;">0–100</div>
<div style="position:absolute;left:798px;width:59px;top:439.88px;text-align:center;font-size:9px;line-height:12px;color:#222;font-weight:normal;font-style:normal;white-space:nowrap;font-family:'Liberation Sans', sans-serif;-webkit-text-stroke:0.15px #222;">90,00 %</div>
<div style="position:absolute;left:678px;top:438px;width:1px;height:34px;background:#6b6b6b;"></div>
<div style="position:absolute;left:739px;top:438px;width:1px;height:34px;background:#6b6b6b;"></div>
<div style="position:absolute;left:797px;top:438px;width:1px;height:34px;background:#6b6b6b;"></div>
<div style="position:absolute;left:857px;top:438px;width:1px;height:34px;background:#6b6b6b;"></div>
<div style="position:absolute;left:1267px;top:438px;width:1px;height:34px;background:#555;"></div>
<div style="position:absolute;left:267px;top:472px;width:1001px;height:1px;background:#000;"></div>
<div style="position:absolute;left:267px;top:473px;width:1001px;height:34px;background:#fff;"></div>
<svg style="position:absolute;left:270px;top:477px;" width="15" height="14" viewBox="0 0 15 14"><rect x="1.5" y="0.5" width="5" height="4.6" fill="#c9ddf6" stroke="#8fb4ea" stroke-width="1"/><rect x="1.5" y="8.2" width="5" height="4.4" fill="#c9ddf6" stroke="#8fb4ea" stroke-width="1"/><rect x="8.5" y="5.3" width="5" height="4.8" fill="#c9ddf6" stroke="#98baec" stroke-width="1"/><path d="M7 1.2 H10.3 L11.3 4.5" fill="none" stroke="#d5e4f8" stroke-width="1"/></svg>
<div style="position:absolute;left:288.5px;top:478.88px;font-size:9px;line-height:12px;color:#1034cc;font-weight:bold;font-style:normal;white-space:nowrap;font-family:'Liberation Sans', sans-serif;">Лекция 6. Рекреационная сущность туристской анимации. Валеология как</div>
<div style="position:absolute;left:271px;top:490.88px;font-size:9px;line-height:12px;color:#1034cc;font-weight:bold;font-style:normal;white-space:nowrap;font-family:'Liberation Sans', sans-serif;">теоретическая основа туристской анимации</div>
<div style="position:absolute;left:679px;width:60px;top:474.88px;text-align:center;font-size:9px;line-height:12px;color:#222;font-weight:normal;font-style:normal;white-space:nowrap;font-family:'Liberation Sans', sans-serif;-webkit-text-stroke:0.15px #222;">Отлично</div>
<div style="position:absolute;left:679px;width:60px;top:486.88px;text-align:center;font-size:9px;line-height:12px;color:#222;font-weight:normal;font-style:normal;white-space:nowrap;font-family:'Liberation Sans', sans-serif;-webkit-text-stroke:0.15px #222;">(100,00 %)</div>
<div style="position:absolute;left:740px;width:57px;top:474.88px;text-align:center;font-size:9px;line-height:12px;color:#222;font-weight:normal;font-style:normal;white-space:nowrap;font-family:'Liberation Sans', sans-serif;-webkit-text-stroke:0.15px #222;">0–100</div>
<div style="position:absolute;left:798px;width:59px;top:474.88px;text-align:center;font-size:9px;line-height:12px;color:#222;font-weight:normal;font-style:normal;white-space:nowrap;font-family:'Liberation Sans', sans-serif;-webkit-text-stroke:0.15px #222;">100,00 %</div>
<div style="position:absolute;left:678px;top:473px;width:1px;height:34px;background:#6b6b6b;"></div>
<div style="position:absolute;left:739px;top:473px;width:1px;height:34px;background:#6b6b6b;"></div>
<div style="position:absolute;left:797px;top:473px;width:1px;height:34px;background:#6b6b6b;"></div>
<div style="position:absolute;left:857px;top:473px;width:1px;height:34px;background:#6b6b6b;"></div>
<div style="position:absolute;left:1267px;top:473px;width:1px;height:34px;background:#555;"></div>
<div style="position:absolute;left:267px;top:507px;width:1001px;height:1px;background:#000;"></div>
<div style="position:absolute;left:267px;top:508px;width:1001px;height:34px;background:#fff;"></div>
<svg style="position:absolute;left:270px;top:512px;" width="15" height="14" viewBox="0 0 15 14"><rect x="1.5" y="0.5" width="5" height="4.6" fill="#c9ddf6" stroke="#8fb4ea" stroke-width="1"/><rect x="1.5" y="8.2" width="5" height="4.4" fill="#c9ddf6" stroke="#8fb4ea" stroke-width="1"/><rect x="8.5" y="5.3" width="5" height="4.8" fill="#c9ddf6" stroke="#98baec" stroke-width="1"/><path d="M7 1.2 H10.3 L11.3 4.5" fill="none" stroke="#d5e4f8" stroke-width="1"/></svg>
<div style="position:absolute;left:288.5px;top:513.88px;font-size:9px;line-height:12px;color:#1034cc;font-weight:bold;font-style:normal;white-space:nowrap;font-family:'Liberation Sans', sans-serif;">Лекция 7. Драматургия анимационно-театрализованных программ. Сценарий как</div>
<div style="position:absolute;left:271px;top:525.88px;font-size:9px;line-height:12px;color:#1034cc;font-weight:bold;font-style:normal;white-space:nowrap;font-family:'Liberation Sans', sans-serif;">основной вид драматургии</div>
<div style="position:absolute;left:679px;width:60px;top:509.88px;text-align:center;font-size:9px;line-height:12px;color:#222;font-weight:normal;font-style:normal;white-space:nowrap;font-family:'Liberation Sans', sans-serif;-webkit-text-stroke:0.15px #222;">Отлично</div>
<div style="position:absolute;left:679px;width:60px;top:521.88px;text-align:center;font-size:9px;line-height:12px;color:#222;font-weight:normal;font-style:normal;white-space:nowrap;font-family:'Liberation Sans', sans-serif;-webkit-text-stroke:0.15px #222;">(100,00 %)</div>
<div style="position:absolute;left:740px;width:57px;top:509.88px;text-align:center;font-size:9px;line-height:12px;color:#222;font-weight:normal;font-style:normal;white-space:nowrap;font-family:'Liberation Sans', sans-serif;-webkit-text-stroke:0.15px #222;">0–100</div>
<div style="position:absolute;left:798px;width:59px;top:509.88px;text-align:center;font-size:9px;line-height:12px;color:#222;font-weight:normal;font-style:normal;white-space:nowrap;font-family:'Liberation Sans', sans-serif;-webkit-text-stroke:0.15px #222;">100,00 %</div>
<div style="position:absolute;left:678px;top:508px;width:1px;height:34px;background:#6b6b6b;"></div>
<div style="position:absolute;left:739px;top:508px;width:1px;height:34px;background:#6b6b6b;"></div>
<div style="position:absolute;left:797px;top:508px;width:1px;height:34px;background:#6b6b6b;"></div>
<div style="position:absolute;left:857px;top:508px;width:1px;height:34px;background:#6b6b6b;"></div>
<div style="position:absolute;left:1267px;top:508px;width:1px;height:34px;background:#555;"></div>
<div style="position:absolute;left:267px;top:542px;width:1001px;height:1px;background:#000;"></div>
<div style="position:absolute;left:267px;top:543px;width:1001px;height:34px;background:#fff;"></div>
<svg style="position:absolute;left:270px;top:547px;" width="15" height="14" viewBox="0 0 15 14"><rect x="1.5" y="0.5" width="5" height="4.6" fill="#c9ddf6" stroke="#8fb4ea" stroke-width="1"/><rect x="1.5" y="8.2" width="5" height="4.4" fill="#c9ddf6" stroke="#8fb4ea" stroke-width="1"/><rect x="8.5" y="5.3" width="5" height="4.8" fill="#c9ddf6" stroke="#98baec" stroke-width="1"/><path d="M7 1.2 H10.3 L11.3 4.5" fill="none" stroke="#d5e4f8" stroke-width="1"/></svg>
<div style="position:absolute;left:288.5px;top:548.88px;font-size:9px;line-height:12px;color:#1034cc;font-weight:bold;font-style:normal;white-space:nowrap;font-family:'Liberation Sans', sans-serif;">Лекция 8. Подготовка и разработка анимационных программ, массовых праздников,</div>
<div style="position:absolute;left:271px;top:560.88px;font-size:9px;line-height:12px;color:#1034cc;font-weight:bold;font-style:normal;white-space:nowrap;font-family:'Liberation Sans', sans-serif;">организация концертов, вечеров отдыха</div>
<div style="position:absolute;left:679px;width:60px;top:544.88px;text-align:center;font-size:9px;line-height:12px;color:#222;font-weight:normal;font-style:normal;white-space:nowrap;font-family:'Liberation Sans', sans-serif;-webkit-text-stroke:0.15px #222;">Хорошо</div>
<div style="position:absolute;left:679px;width:60px;top:556.88px;text-align:center;font-size:9px;line-height:12px;color:#222;font-weight:normal;font-style:normal;white-space:nowrap;font-family:'Liberation Sans', sans-serif;-webkit-text-stroke:0.15px #222;">(87,50 %)</div>
<div style="position:absolute;left:740px;width:57px;top:544.88px;text-align:center;font-size:9px;line-height:12px;color:#222;font-weight:normal;font-style:normal;white-space:nowrap;font-family:'Liberation Sans', sans-serif;-webkit-text-stroke:0.15px #222;">0–100</div>
<div style="position:absolute;left:798px;width:59px;top:544.88px;text-align:center;font-size:9px;line-height:12px;color:#222;font-weight:normal;font-style:normal;white-space:nowrap;font-family:'Liberation Sans', sans-serif;-webkit-text-stroke:0.15px #222;">87,50 %</div>
<div style="position:absolute;left:678px;top:543px;width:1px;height:34px;background:#6b6b6b;"></div>
<div style="position:absolute;left:739px;top:543px;width:1px;height:34px;background:#6b6b6b;"></div>
<div style="position:absolute;left:797px;top:543px;width:1px;height:34px;background:#6b6b6b;"></div>
<div style="position:absolute;left:857px;top:543px;width:1px;height:34px;background:#6b6b6b;"></div>
<div style="position:absolute;left:1267px;top:543px;width:1px;height:34px;background:#555;"></div>
<div style="position:absolute;left:267px;top:577px;width:1001px;height:1px;background:#000;"></div>
<div style="position:absolute;left:267px;top:578px;width:1001px;height:28px;background:#fff;"></div>
<svg style="position:absolute;left:270px;top:585px;" width="15" height="14" viewBox="0 0 15 14"><rect x="1.5" y="0.5" width="5" height="4.6" fill="#c9ddf6" stroke="#8fb4ea" stroke-width="1"/><rect x="1.5" y="8.2" width="5" height="4.4" fill="#c9ddf6" stroke="#8fb4ea" stroke-width="1"/><rect x="8.5" y="5.3" width="5" height="4.8" fill="#c9ddf6" stroke="#98baec" stroke-width="1"/><path d="M7 1.2 H10.3 L11.3 4.5" fill="none" stroke="#d5e4f8" stroke-width="1"/></svg>
<div style="position:absolute;left:288.5px;top:586.88px;font-size:9px;line-height:12px;color:#1034cc;font-weight:bold;font-style:normal;white-space:nowrap;font-family:'Liberation Sans', sans-serif;">Лекция 9. Игра как эффективная форма анимационной деятельности в туризме</div>
<div style="position:absolute;left:679px;width:60px;top:579.88px;text-align:center;font-size:9px;line-height:12px;color:#222;font-weight:normal;font-style:normal;white-space:nowrap;font-family:'Liberation Sans', sans-serif;-webkit-text-stroke:0.15px #222;">Отлично</div>
<div style="position:absolute;left:679px;width:60px;top:591.88px;text-align:center;font-size:9px;line-height:12px;color:#222;font-weight:normal;font-style:normal;white-space:nowrap;font-family:'Liberation Sans', sans-serif;-webkit-text-stroke:0.15px #222;">(100,00 %)</div>
<div style="position:absolute;left:740px;width:57px;top:579.88px;text-align:center;font-size:9px;line-height:12px;color:#222;font-weight:normal;font-style:normal;white-space:nowrap;font-family:'Liberation Sans', sans-serif;-webkit-text-stroke:0.15px #222;">0–100</div>
<div style="position:absolute;left:798px;width:59px;top:579.88px;text-align:center;font-size:9px;line-height:12px;color:#222;font-weight:normal;font-style:normal;white-space:nowrap;font-family:'Liberation Sans', sans-serif;-webkit-text-stroke:0.15px #222;">100,00 %</div>
<div style="position:absolute;left:678px;top:578px;width:1px;height:28px;background:#6b6b6b;"></div>
<div style="position:absolute;left:739px;top:578px;width:1px;height:28px;background:#6b6b6b;"></div>
<div style="position:absolute;left:797px;top:578px;width:1px;height:28px;background:#6b6b6b;"></div>
<div style="position:absolute;left:857px;top:578px;width:1px;height:28px;background:#6b6b6b;"></div>
<div style="position:absolute;left:1267px;top:578px;width:1px;height:28px;background:#555;"></div>
<div style="position:absolute;left:267px;top:606px;width:1001px;height:1px;background:#000;"></div>
<div style="position:absolute;left:267px;top:607px;width:1001px;height:28px;background:#fff;"></div>
<svg style="position:absolute;left:270px;top:614px;" width="16" height="15" viewBox="0 0 16 15"><path d="M2.5 0.5 H8.5 L11.5 3.5 V13.5 H2.5 Z" fill="#cfe1f8" stroke="#a6c3ec" stroke-width="1"/><path d="M8.5 0.5 V3.5 H11.5" fill="#fff" stroke="#a6c3ec" stroke-width="0.8"/><path d="M1 8.5 L4.6 12.3 L13.5 1.5" fill="none" stroke="#e8661c" stroke-width="2"/></svg>
<div style="position:absolute;left:288.5px;top:615.88px;font-size:9px;line-height:12px;color:#1034cc;font-weight:bold;font-style:normal;white-space:nowrap;font-family:'Liberation Sans', sans-serif;">Итоговое тестирование</div>
<div style="position:absolute;left:679px;width:60px;top:608.88px;text-align:center;font-size:9px;line-height:12px;color:#222;font-weight:normal;font-style:normal;white-space:nowrap;font-family:'Liberation Sans', sans-serif;-webkit-text-stroke:0.15px #222;">Отлично</div>
<div style="position:absolute;left:679px;width:60px;top:620.88px;text-align:center;font-size:9px;line-height:12px;color:#222;font-weight:normal;font-style:normal;white-space:nowrap;font-family:'Liberation Sans', sans-serif;-webkit-text-stroke:0.15px #222;">(100,00 %)</div>
<div style="position:absolute;left:740px;width:57px;top:608.88px;text-align:center;font-size:9px;line-height:12px;color:#222;font-weight:normal;font-style:normal;white-space:nowrap;font-family:'Liberation Sans', sans-serif;-webkit-text-stroke:0.15px #222;">0–100</div>
<div style="position:absolute;left:798px;width:59px;top:608.88px;text-align:center;font-size:9px;line-height:12px;color:#222;font-weight:normal;font-style:normal;white-space:nowrap;font-family:'Liberation Sans', sans-serif;-webkit-text-stroke:0.15px #222;">100,00 %</div>
<div style="position:absolute;left:678px;top:607px;width:1px;height:28px;background:#6b6b6b;"></div>
<div style="position:absolute;left:739px;top:607px;width:1px;height:28px;background:#6b6b6b;"></div>
<div style="position:absolute;left:797px;top:607px;width:1px;height:28px;background:#6b6b6b;"></div>
<div style="position:absolute;left:857px;top:607px;width:1px;height:28px;background:#6b6b6b;"></div>
<div style="position:absolute;left:1267px;top:607px;width:1px;height:28px;background:#555;"></div>
<div style="position:absolute;left:267px;top:635px;width:1001px;height:2px;background:#000;"></div>
<div style="position:absolute;left:267px;top:637px;width:412px;height:28px;background:#f3e0d2;"></div>
<div style="position:absolute;left:679px;top:637px;width:589px;height:28px;background:#dcdcdc;"></div>
<svg style="position:absolute;left:270.5px;top:644px;" width="14" height="14" viewBox="0 0 14 14"><rect x="1.2" y="0.8" width="11.2" height="11.6" fill="#e4e4e4" stroke="#9e9e9e" stroke-width="1.5"/><rect x="2.6" y="2.2" width="8.4" height="2" fill="#f4f4f4"/><path d="M1.5 5 H12 M2 7.6 H11.6 M2 10 H11.6 M5.2 5 V12 M8.4 5 V12" stroke="#a4a4a4" stroke-width="1"/></svg>
<div style="position:absolute;left:288.5px;top:645.88px;font-size:9px;line-height:12px;color:#222;font-weight:bold;font-style:italic;white-space:nowrap;font-family:'Liberation Sans', sans-serif;">Итоговая оценка за курс</div>
<div style="position:absolute;left:679px;width:60px;top:638.88px;text-align:center;font-size:9px;line-height:12px;color:#222;font-weight:bold;font-style:italic;white-space:nowrap;font-family:'Liberation Sans', sans-serif;">Отлично</div>
<div style="position:absolute;left:679px;width:60px;top:650.88px;text-align:center;font-size:9px;line-height:12px;color:#222;font-weight:bold;font-style:italic;white-space:nowrap;font-family:'Liberation Sans', sans-serif;">(96,38 %)</div>
<div style="position:absolute;left:740px;width:57px;top:638.88px;text-align:center;font-size:9px;line-height:12px;color:#222;font-weight:bold;font-style:italic;white-space:nowrap;font-family:'Liberation Sans', sans-serif;">0–100</div>
<div style="position:absolute;left:798px;width:59px;top:638.88px;text-align:center;font-size:9px;line-height:12px;color:#222;font-weight:bold;font-style:italic;white-space:nowrap;font-family:'Liberation Sans', sans-serif;">96,38 %</div>
<div style="position:absolute;left:242px;top:665px;width:1026px;height:1px;background:#000;"></div>
<div style="position:absolute;left:678px;top:665px;width:1px;height:1px;background:#fff;"></div>
<div style="position:absolute;left:739px;top:665px;width:1px;height:1px;background:#fff;"></div>
<div style="position:absolute;left:797px;top:665px;width:1px;height:1px;background:#fff;"></div>
<div style="position:absolute;left:857px;top:665px;width:1px;height:1px;background:#fff;"></div>
<div style="position:absolute;left:757.4013157894736px;top:207.65px;font-size:39.5px;line-height:43.5px;color:#000;font-weight:bold;font-style:normal;white-space:nowrap;font-family:'Liberation Sans', sans-serif;letter-spacing:0.5px;mix-blend-mode:multiply;-webkit-text-stroke:0.7px;-webkit-text-stroke-color:currentColor"><span style="color:#cbcbcb">DiST</span><span style="color:#fdeccb">24</span></div>
<svg style="position:absolute;left:788.0657894736842px;top:191.6315789473684px;mix-blend-mode:multiply" width="32" height="22" viewBox="0 0 32 22"><path d="M3 3 A15 15 0 0 1 22 18 M3 8 A10 10 0 0 1 17 18 M3 13 A5 5 0 0 1 12 18" fill="none" stroke="#b9d6f4" stroke-width="1.8"/></svg>
<div style="position:absolute;left:657.4013157894736px;top:451.15px;font-size:39.5px;line-height:43.5px;color:#000;font-weight:bold;font-style:normal;white-space:nowrap;font-family:'Liberation Sans', sans-serif;letter-spacing:0.5px;mix-blend-mode:multiply;-webkit-text-stroke:0.7px;-webkit-text-stroke-color:currentColor"><span style="color:#cbcbcb">DiST</span><span style="color:#fdeccb">24</span></div>
<svg style="position:absolute;left:688.0657894736842px;top:435.13157894736844px;mix-blend-mode:multiply" width="32" height="22" viewBox="0 0 32 22"><path d="M3 3 A15 15 0 0 1 22 18 M3 8 A10 10 0 0 1 17 18 M3 13 A5 5 0 0 1 12 18" fill="none" stroke="#b9d6f4" stroke-width="1.8"/></svg>
</div></body></html>
